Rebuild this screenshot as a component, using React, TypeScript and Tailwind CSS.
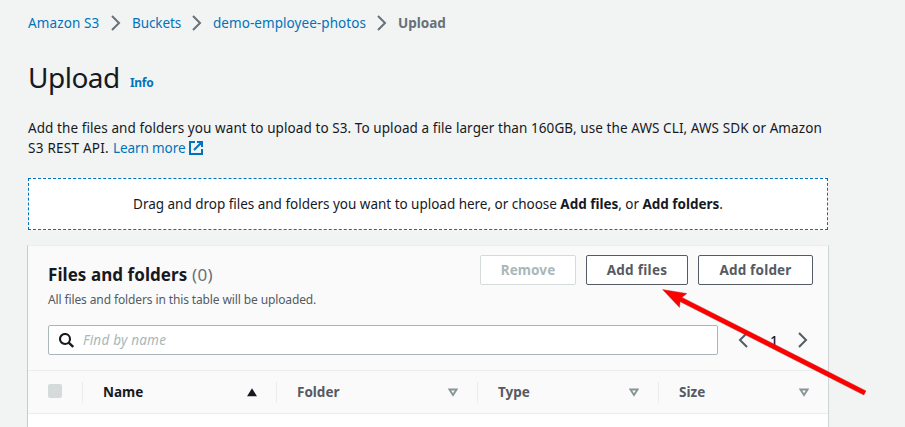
import type { ReactNode } from 'react';

function Chevron({ left = false, color = '#687078' }: { left?: boolean; color?: string }) {
  return (
    <svg width="10" height="16" viewBox="0 0 10 16" className="block shrink-0" fill="none" stroke={color} strokeWidth="2">
      <path d={left ? 'M9 1 L2 8 L9 15' : 'M1 1 L8 8 L1 15'} />
    </svg>
  );
}

function Button({ children, className }: { children: ReactNode; className: string }) {
  return (
    <button className={`h-[30px] rounded-[2px] border bg-white text-[13.5px] font-bold leading-[28px] whitespace-nowrap ${className}`}>
      {children}
    </button>
  );
}

function Column({ label, className, active = false }: { label: string; className: string; active?: boolean }) {
  return (
    <div className={`flex h-[21px] items-center border-l border-[#eaeded] pl-5 ${className}`}>
      <span className={`text-[13.5px] leading-[21px] font-bold ${active ? 'text-[#16191f]' : 'text-[#545b64]'}`}>{label}</span>
      <svg width="10" height="9" viewBox="0 0 10 9" className="mr-[19px] ml-auto block">
        {active ? (
          <path d="M5 0.3 L10 8.3 H0 Z" fill="#16191f" />
        ) : (
          <path d="M1.4 1.5 H8.6 L5 7 Z" fill="none" stroke="#879596" strokeWidth="1.9" />
        )}
      </svg>
    </div>
  );
}

export default function App() {
  return (
    <div className="relative h-[427px] w-[905px] overflow-hidden bg-[#f2f3f3] pl-7 font-['Noto_Sans',sans-serif] text-[14px] text-[#16191f]">
      <nav className="flex h-[46px] items-center whitespace-nowrap text-[#0073bb]">
        <a className="w-[83px] text-[13.5px] tracking-[0.12px]">Amazon S3</a>
        <Chevron />
        <a className="ml-[11px] w-[60px] text-[13.5px] tracking-[-0.1px]">Buckets</a>
        <Chevron />
        <a className="ml-[11px] w-[164px] text-[13.5px] tracking-[0.06px]">demo-employee-photos</a>
        <Chevron />
        <span className="ml-[11px] text-[13.5px] font-bold tracking-[0px] text-[#687078]">Upload</span>
      </nav>
      <div className="mt-[13px] flex h-[36px] items-baseline whitespace-nowrap">
        <h1 className="w-[102px] text-[28px] leading-[36px] tracking-[-0.5px]">Upload</h1>
        <a className="relative -top-px text-[12px] font-bold tracking-[-0.3px] text-[#0073bb]">Info</a>
      </div>
      <p className="mt-[23px] text-[13.5px] leading-[20px] tracking-[0.08px] whitespace-nowrap">
        Add the files and folders you want to upload to S3. To upload a file larger than 160GB, use the AWS CLI, AWS SDK or Amazon
        <br />
        <span className="flex">
          <span className="w-[85px] tracking-[0.25px]">S3 REST API.</span>
          <a className="w-[76px] tracking-[-0.1px] text-[#0073bb]">Learn more</a>
          <svg width="14" height="14" viewBox="0 0 14 14" className="mt-[3px] block" fill="none" stroke="#0073bb" strokeWidth="2">
            <path d="M6 1 H1 V13 H13 V8 M8 1 H13 V6 M13 1 L5 9" />
          </svg>
        </span>
      </p>
      <div className="mt-5 flex h-[52px] w-[800px] items-center justify-center border border-dashed border-[#0073bb] bg-white text-[13.5px] tracking-[-0.02px] whitespace-pre">
        <span>Drag and drop files and folders you want to upload here, or choose </span><b>Add files</b><span>, or </span><b>Add folders</b>.
      </div>
      <section className="mt-[15px] -ml-px h-[190px] w-[802px] border border-b-0 border-t-[#eaeded] border-r-[#d0d5d5] border-l-[#c5cbcb] bg-white">
        <div className="h-[124px] bg-[#fafafa] pl-5">
          <div className="flex h-[79px] justify-between pr-[15px]">
            <div className="pt-[18px] whitespace-nowrap">
              <h2 className="flex text-[17px] leading-[22px]">
                <span className="w-[144px] font-bold tracking-[0.06px]">Files and folders</span>
                <span className="tracking-[0.3px] text-[#687078]">(0)</span>
              </h2>
              <p className="mt-[5px] text-[12px] leading-[18px] tracking-[-0.12px] text-[#545b64]">All files and folders in this table will be uploaded.</p>
            </div>
            <div className="flex gap-[10px] pt-[9px]">
              <Button className="w-[96px] border-[#d5dbdb] tracking-[0.1px] text-[#aab7b8]">Remove</Button>
              <Button className="w-[102px] border-[#545b64] tracking-[0.3px] text-[#545b64]">Add files</Button>
              <Button className="w-[115px] border-[#545b64] tracking-[0.2px] text-[#545b64]">Add folder</Button>
            </div>
          </div>
          <div className="flex items-center">
            <div className="flex h-[30px] w-[670px] items-center rounded-[2px] border border-[#aab7b8] bg-white pl-[10px]">
              <svg width="15" height="15" viewBox="0 0 15 15" fill="none" stroke="#16191f" strokeWidth="2.1">
                <circle cx="6" cy="6" r="5" />
                <path d="M9.7 9.7 L14.2 14" strokeWidth="2.4" />
              </svg>
              <span className="ml-[9px] text-[13.5px] tracking-[0.22px] text-[#aab7b8] italic">Find by name</span>
            </div>
            <div className="ml-5 flex h-[30px] items-center">
              <Chevron left color="#545b64" />
              <span className="ml-[22px] w-[28px] text-[14px] font-medium">1</span>
              <Chevron color="#545b64" />
            </div>
          </div>
        </div>
        <div className="flex h-[44px] items-center border-y border-[#eaeded] bg-[#fafafa] pl-5">
          <span className="mb-[2px] block size-[14px] rounded-[2px] bg-[#d5dbdb]" />
          <Column label="Name" active className="ml-5 w-[194px]" />
          <Column label="Folder" className="w-[201px]" />
          <Column label="Type" className="w-[181px]" />
          <Column label="Size" className="w-[170px]" />
        </div>
      </section>
      <svg width="905" height="427" viewBox="0 0 905 427" className="pointer-events-none absolute inset-0">
        <path d="M865 393 L678 298" stroke="#7a4a4a" strokeOpacity=".45" strokeWidth="5.6" fill="none" />
        <path d="M865 393 L678 298" stroke="#fe0000" strokeWidth="4.6" fill="none" />
        <path d="M662.5 289.5 L687 293.5 L680.5 298.5 L679.5 307.5 Z" fill="#fe0000" stroke="#a04040" strokeWidth=".4" />
      </svg>
    </div>
  );
}
